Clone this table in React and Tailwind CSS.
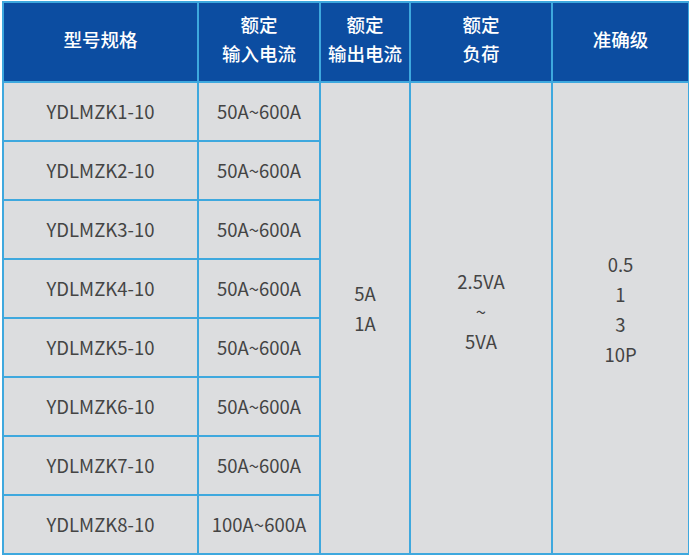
const rows = [
  ["YDLMZK1-10", "50A~600A"],
  ["YDLMZK2-10", "50A~600A"],
  ["YDLMZK3-10", "50A~600A"],
  ["YDLMZK4-10", "50A~600A"],
  ["YDLMZK5-10", "50A~600A"],
  ["YDLMZK6-10", "50A~600A"],
  ["YDLMZK7-10", "50A~600A"],
  ["YDLMZK8-10", "100A~600A"],
];

const th = "border-2 border-[#3ea8de] bg-[#0c4da1] text-white font-medium text-[18.5px] leading-[29px] text-center align-middle pb-[6px]";
const td = "border-2 border-[#3ea8de] bg-[#dcdddf] text-[#444] text-[18.5px] leading-[30px] text-center align-middle";

export default function App() {
  return (
    <div className="bg-white w-[689px] h-[557px] pl-[2px] pt-[1px]" style={{ fontFamily: '"Noto Sans CJK SC", "Noto Sans", sans-serif' }}>
      <table className="table-fixed border-collapse w-[686px]">
        <colgroup>
          <col className="w-[195px]" />
          <col className="w-[122px]" />
          <col className="w-[90px]" />
          <col className="w-[142px]" />
          <col className="w-[137px]" />
        </colgroup>
        <thead>
          <tr className="h-[80px]">
            <th className={th}>型号规格</th>
            <th className={th}>额定<br />输入电流</th>
            <th className={th}>额定<br />输出电流</th>
            <th className={th}>额定<br />负荷</th>
            <th className={th}>准确级</th>
          </tr>
        </thead>
        <tbody>
          {rows.map((r, i) => (
            <tr key={r[0]} className="h-[59px]">
              <td className={td + " pb-[2px]"}>{r[0]}</td>
              <td className={td + " pb-[2px]"}>{r[1]}</td>
              {i === 0 && (
                <>
                  <td rowSpan={8} className={td + " pb-[20px]"}>5A<br />1A</td>
                  <td rowSpan={8} className={td + " pb-[14px]"}>2.5VA<br />~<br />5VA</td>
                  <td rowSpan={8} className={td + " pb-[18px]"}>0.5<br />1<br />3<br />10P</td>
                </>
              )}
            </tr>
          ))}
        </tbody>
      </table>
    </div>
  );
}
